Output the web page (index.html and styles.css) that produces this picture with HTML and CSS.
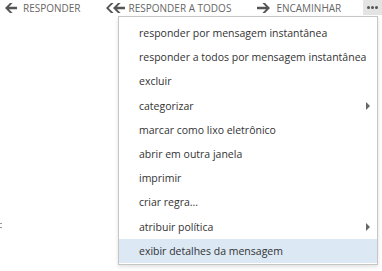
FILE: index.html
```html
<html>
<head>
  <title>Mensagem</title>
  <link rel="stylesheet" href="styles.css">
</head>
<body>
  <div class="toolbar">
    <span class="action">
      <svg width="12" height="10" viewBox="0 0 12 10"><path d="M5 0 L0 5 L5 10 H7.6 L4 6.2 H12 V3.8 H4 L7.6 0 Z" fill="#555"/></svg>
      RESPONDER
    </span>
    <span class="action all">
      <svg width="19" height="10" viewBox="0 0 19 10"><path d="M5 0 L0 5 L5 10 H7.6 L2.6 5 L7.6 0 Z" fill="#555"/><path d="M12 0 L7 5 L12 10 H14.6 L11 6.2 H19 V3.8 H11 L14.6 0 Z" fill="#555"/></svg>
      RESPONDER A TODOS
    </span>
    <span class="action fwd">
      <svg width="13" height="10" viewBox="0 0 13 10"><path d="M8 0 L13 5 L8 10 H5.4 L9 6.2 H0 V3.8 H9 L5.4 0 Z" fill="#555"/></svg>
      ENCAMINHAR
    </span>
    <span class="more"><i></i><i></i><i></i></span>
  </div>

  <div class="content">
    <span class="edge"><i></i><i></i></span>
  </div>

  <ul class="menu">
    <li>responder por mensagem instantânea</li>
    <li>responder a todos por mensagem instantânea</li>
    <li>excluir</li>
    <li class="sub">categorizar</li>
    <li>marcar como lixo eletrônico</li>
    <li>abrir em outra janela</li>
    <li>imprimir</li>
    <li>criar regra...</li>
    <li class="sub">atribuir política</li>
    <li class="active">exibir detalhes da mensagem</li>
  </ul>
</body>
</html>
```

FILE: styles.css
```css
body {
  margin: 0;
  background: #fff;
  font-family: "Open Sans", "Noto Sans", sans-serif;
  position: relative;
  width: 382px;
  height: 271px;
  overflow: hidden;
}

.toolbar {
  display: flex;
  align-items: center;
  height: 16px;
  padding-left: 5px;
  color: #666;
  font-size: 10px;
}

.action {
  display: flex;
  align-items: center;
  gap: 6px;
  white-space: nowrap;
}

.action.all {
  margin-left: 25px;
  gap: 4px;
}

.action.fwd {
  margin-left: 26px;
}

.more {
  margin-left: auto;
  width: 19px;
  height: 15px;
  background: #e4e4e4;
  display: flex;
  align-items: center;
  justify-content: center;
  gap: 1px;
  align-self: flex-start;
}

.more i {
  width: 3px;
  height: 3px;
  background: #555;
  border-radius: 50%;
}

.content {
  padding-top: 207px;
}

.edge {
  display: flex;
  flex-direction: column;
  gap: 3px;
  width: 2px;
}

.edge i {
  width: 2px;
  height: 1px;
  background: #999;
}

.menu {
  position: absolute;
  left: 118px;
  top: 16px;
  width: 258px;
  margin: 0;
  padding: 4px 0 1px;
  list-style: none;
  background: #fff;
  border: 1px solid #c6c6c6;
  box-shadow: 0 2px 4px rgba(0, 0, 0, 0.12);
  color: #333;
  font-size: 10.5px;
}

.menu li {
  height: 24.2px;
  line-height: 24px;
  padding-left: 20px;
  position: relative;
  white-space: nowrap;
}

.menu li.sub::after {
  content: "";
  position: absolute;
  right: 7px;
  top: 8px;
  border-left: 4px solid #666;
  border-top: 4px solid transparent;
  border-bottom: 4px solid transparent;
}

.menu li.active {
  background: #dce8f4;
}
```
